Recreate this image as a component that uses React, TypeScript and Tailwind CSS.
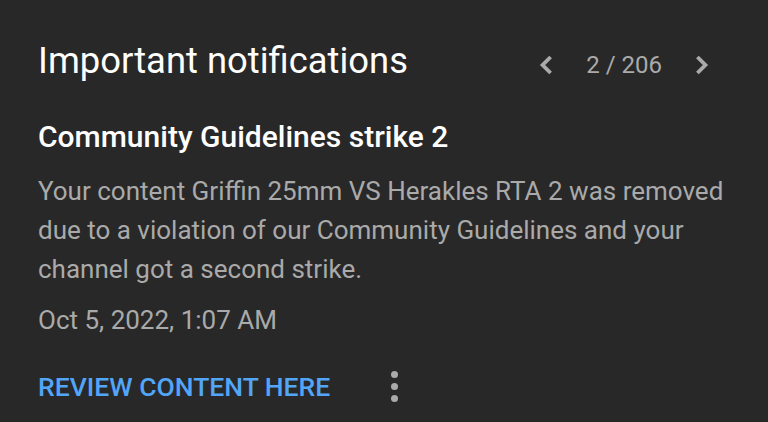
function Chevron({ dir }: { dir: 'left' | 'right' }) {
    return (
        <svg
            width="15"
            height="20"
            viewBox="0 0 15 20"
            fill="none"
            stroke="currentColor"
            strokeWidth="3.8"
            className={dir === 'right' ? 'scale-x-[-1]' : ''}
        >
            <polyline points="12.6,2 4.6,10 12.6,18" />
        </svg>
    )
}

export default function App() {
    return (
        <div
            className="w-[768px] h-[422px] bg-[#282828] overflow-hidden pl-[38px] pr-[58px] pt-[37px]"
            style={{ fontFamily: 'Roboto, "Noto Sans", sans-serif' }}
        >
            <div className="flex items-start justify-between">
                <h1 className="text-[36.4px] leading-[48px] text-white">Important notifications</h1>
                <div className="flex items-center h-[48px] mt-[4px] text-[#aaaaaa]">
                    <Chevron dir="left" />
                    <span className="text-[24px] ml-[33px] mr-[33px]">2 / 206</span>
                    <Chevron dir="right" />
                </div>
            </div>
            <h2 className="mt-[28px] text-[30px] leading-[40px] font-medium text-white">
                Community Guidelines strike 2
            </h2>
            <p className="mt-[15px] text-[26px] leading-[39px] text-[#aaaaaa] w-[700px]">
                Your content Griffin 25mm VS Herakles RTA 2 was removed due to a violation of our
                Community Guidelines and your channel got a second strike.
            </p>
            <div className="mt-[12px] text-[26px] leading-[39px] text-[#aaaaaa]">Oct 5, 2022, 1:07 AM</div>
            <div className="mt-[27px] flex items-center">
                <span className="text-[26.5px] font-medium text-[#52a5f7] leading-[39px]">
                    REVIEW CONTENT HERE
                </span>
                <div className="ml-[61px] flex flex-col gap-[5px]">
                    <span className="w-[7px] h-[7px] rounded-full bg-[#aaaaaa]" />
                    <span className="w-[7px] h-[7px] rounded-full bg-[#aaaaaa]" />
                    <span className="w-[7px] h-[7px] rounded-full bg-[#aaaaaa]" />
                </div>
            </div>
        </div>
    )
}
